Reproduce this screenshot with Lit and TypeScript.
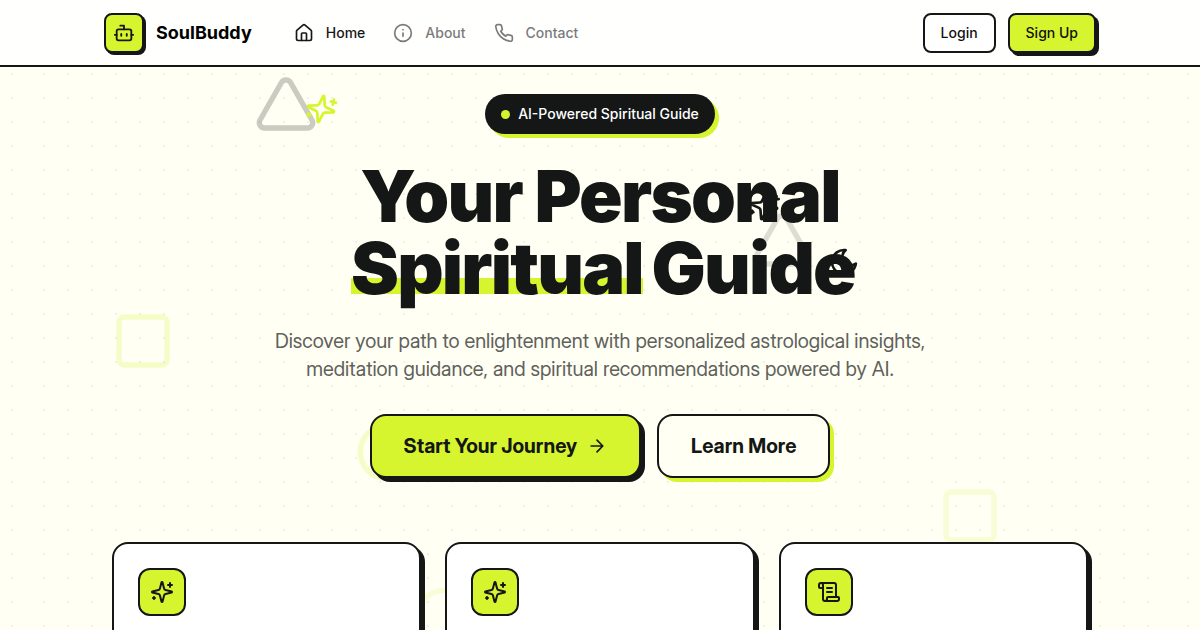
import { LitElement, html, css, svg } from "lit";
import { customElement, property } from "lit/decorators.js";

const icons: Record<string, unknown> = {
  bot: svg`<path d="M12 8V4H8"/><rect width="16" height="12" x="4" y="8" rx="2"/><path d="M2 14h2M20 14h2M15 13v2M9 13v2"/>`,
  home: svg`<path d="M15 21v-8a1 1 0 0 0-1-1h-4a1 1 0 0 0-1 1v8"/><path d="M3 10a2 2 0 0 1 .709-1.528l7-5.999a2 2 0 0 1 2.582 0l7 5.999A2 2 0 0 1 21 10v9a2 2 0 0 1-2 2H5a2 2 0 0 1-2-2z"/>`,
  info: svg`<circle cx="12" cy="12" r="10"/><path d="M12 16v-4M12 8h.01"/>`,
  phone: svg`<path d="M22 16.92v3a2 2 0 0 1-2.18 2 19.79 19.79 0 0 1-8.63-3.07 19.5 19.5 0 0 1-6-6 19.79 19.79 0 0 1-3.07-8.67A2 2 0 0 1 4.11 2h3a2 2 0 0 1 2 1.72 12.84 12.84 0 0 0 .7 2.81 2 2 0 0 1-.45 2.11L8.09 9.91a16 16 0 0 0 6 6l1.27-1.27a2 2 0 0 1 2.11-.45 12.84 12.84 0 0 0 2.81.7A2 2 0 0 1 22 16.92z"/>`,
  arrow: svg`<path d="M5 12h14M12 5l7 7-7 7"/>`,
  sparkles: svg`<path d="M9.937 15.5A2 2 0 0 0 8.5 14.063l-6.135-1.582a.5.5 0 0 1 0-.962L8.5 9.936A2 2 0 0 0 9.937 8.5l1.582-6.135a.5.5 0 0 1 .963 0L14.063 8.5A2 2 0 0 0 15.5 9.937l6.135 1.581a.5.5 0 0 1 0 .964L15.5 14.063a2 2 0 0 0-1.437 1.437l-1.582 6.135a.5.5 0 0 1-.963 0z"/><path d="M20 3v4M22 5h-4M4 17v2M5 18H3"/>`,
  moon: svg`<path d="M12 3a6 6 0 0 0 9 9 9 9 0 1 1-9-9Z"/>`,
  scroll: svg`<path d="M15 12h-5M15 8h-5M19 17V5a2 2 0 0 0-2-2H4"/><path d="M8 21h12a2 2 0 0 0 2-2v-1a1 1 0 0 0-1-1H11a1 1 0 0 0-1 1v1a2 2 0 1 1-4 0V5a2 2 0 1 0-4 0v2a1 1 0 0 0 1 1h3"/>`,
  triangle: svg`<path d="M13.73 4a2 2 0 0 0-3.46 0l-8 14A2 2 0 0 0 4 21h16a2 2 0 0 0 1.73-3Z"/>`,
  square: svg`<rect width="18" height="18" x="3" y="3" rx="2"/>`,
  circle: svg`<circle cx="12" cy="12" r="10"/>`,
};

@customElement("line-icon")
export class LineIcon extends LitElement {
  @property() name = "";
  static styles = css`
    :host { display: block; width: 20px; height: 20px; flex: none; }
    svg { display: block; width: 100%; height: 100%; fill: none; stroke: currentColor; stroke-width: 2; stroke-linecap: round; stroke-linejoin: round; }
  `;
  render() {
    return html`<svg viewBox="0 0 24 24" aria-hidden="true">${icons[this.name]}</svg>`;
  }
}

@customElement("app-root")
export class AppRoot extends LitElement {
  static styles = css`
    :host {
      --ink: #141716;
      --lime: #d7f52f;
      --paper: #fffff3;
      --dots: radial-gradient(circle at center, #f0f0e6 1px, transparent 1px);
      display: block;
      height: 100vh;
      overflow: hidden;
      font-family: Inter, "Liberation Sans", sans-serif;
      color: var(--ink);
      background: var(--dots) 0 14px / 24px 24px, var(--paper);
    }
    * { box-sizing: border-box; }
    a { color: inherit; text-decoration: none; }
    button { font: inherit; color: inherit; cursor: pointer; }
    .header { background: #fffffe; border-bottom: 2px solid var(--ink); }
    .bar { display: flex; align-items: center; max-width: 1024px; margin: 0 auto; padding: 13px 16px 12px; }
    .brand { display: flex; align-items: center; gap: 12px; font-size: 18px; line-height: 28px; font-weight: 700; color: #000; }
    .logo { display: grid; place-items: center; width: 40px; height: 40px; border: 2px solid var(--ink); border-radius: 8px; background: var(--lime); box-shadow: 2px 2px 0 var(--ink); color: var(--ink); }
    .logo line-icon { width: 22px; height: 22px; }
    .nav { display: flex; align-items: center; gap: 28px; margin-left: 42px; flex: 1; font-size: 14px; line-height: 20px; font-weight: 500; }
    .link { display: flex; align-items: center; gap: 12px; color: #7b7b7b; }
    .link.active { color: #171717; }
    .actions { display: flex; gap: 12px; }
    .small { height: 40px; padding: 0 16px; border: 2px solid var(--ink); border-radius: 8px; background: #fff; font-size: 14px; line-height: 20px; font-weight: 500; color: #111; }
    .small.primary { background: var(--lime); box-shadow: 3px 3px 0 var(--ink); }
    .page { position: relative; margin: 0 32px; padding: 27px 80px 0; min-height: 600px; background: var(--dots) 0 19px / 24px 24px, var(--paper); }
    .hero { position: relative; display: flex; flex-direction: column; align-items: center; text-align: center; }
    .pill { display: flex; align-items: center; gap: 8px; height: 40px; padding: 0 16px; border-radius: 20px; background: var(--ink); color: #fff; box-shadow: 4px 4px 0 var(--lime); font-size: 14px; line-height: 20px; font-weight: 500; }
    .dot { width: 9px; height: 9px; border-radius: 50%; background: var(--lime); }
    .title { margin: 26px 0 0; font-size: 72px; line-height: 72px; font-weight: 900; letter-spacing: -0.025em; }
    .mark { margin: 0 -4px 0 6px; background: linear-gradient(var(--lime), var(--lime)) 0 54px / 100% 16px no-repeat; }
    .lead { max-width: 672px; margin: 23px 0 0; font-family: "Inter Display", Inter, sans-serif; font-size: 20px; line-height: 28px; color: #5f615d; }
    .cta { display: flex; gap: 16px; margin-top: 31px; }
    .big { display: flex; align-items: center; gap: 10px; height: 64px; padding: 0 32px; border: 2px solid var(--ink); border-radius: 16px; background: var(--paper); font-family: "Inter Display", Inter, sans-serif; font-size: 20px; line-height: 28px; font-weight: 700; box-shadow: 4px 4px 0 var(--lime); }
    .big.primary { background: var(--lime); box-shadow: 4px 4px 0 var(--ink); }
    .cards { display: grid; grid-template-columns: repeat(3, 1fr); gap: 24px; margin-top: 64px; position: relative; }
    .card { height: 240px; padding: 24px; border: 2px solid var(--ink); border-radius: 16px; background: #fff; box-shadow: 4px 4px 0 var(--ink); }
    .badge { display: grid; place-items: center; width: 48px; height: 48px; border: 2px solid var(--ink); border-radius: 12px; background: var(--lime); }
    .badge line-icon { width: 24px; height: 24px; }
    .float { position: absolute; }
    .shape { width: 64px; height: 64px; }
    .glyph { width: 32px; height: 32px; }
    .lime { color: var(--lime); }
    .f1 { left: 222px; top: 5px; opacity: 0.22; }
    .f2 { left: 718px; top: 141px; opacity: 0.14; }
    .f3 { left: 79px; top: 242px; opacity: 0.22; }
    .f4 { left: 906px; top: 417px; opacity: 0.14; }
    .f5 { left: 323px; top: 353px; opacity: 0.22; }
    .f6 { left: 380px; top: 518px; opacity: 0.14; }
    .g1 { left: 273px; top: 26px; transform: rotate(12deg); }
    .g2 { left: 716px; top: 123px; transform: rotate(10deg); }
    .g3 { left: 796px; top: 179px; transform: rotate(8deg); }
  `;

  render() {
    return html`
      <header class="header">
        <div class="bar">
          <a class="brand" href="#"><span class="logo"><line-icon name="bot"></line-icon></span>SoulBuddy</a>
          <nav class="nav">
            <a class="link active" href="#"><line-icon name="home"></line-icon>Home</a>
            <a class="link" href="#about"><line-icon name="info"></line-icon>About</a>
            <a class="link" href="#contact"><line-icon name="phone"></line-icon>Contact</a>
          </nav>
          <div class="actions">
            <button class="small">Login</button>
            <button class="small primary">Sign Up</button>
          </div>
        </div>
      </header>
      <main class="page">
        <line-icon class="float shape f1" name="triangle"></line-icon>
        <line-icon class="float shape f2" name="triangle"></line-icon>
        <line-icon class="float shape lime f3" name="square"></line-icon>
        <line-icon class="float shape lime f4" name="square"></line-icon>
        <line-icon class="float shape lime f5" name="circle"></line-icon>
        <line-icon class="float shape lime f6" name="circle"></line-icon>
        <line-icon class="float glyph lime g1" name="sparkles"></line-icon>
        <line-icon class="float glyph g2" name="sparkles"></line-icon>
        <line-icon class="float glyph g3" name="moon"></line-icon>
        <section class="hero">
          <div class="pill"><span class="dot"></span>AI-Powered Spiritual Guide</div>
          <h1 class="title">Your Personal<br /><span class="mark">Spiritual</span> Guide</h1>
          <p class="lead">Discover your path to enlightenment with personalized astrological insights, meditation guidance, and spiritual recommendations powered by AI.</p>
          <div class="cta">
            <button class="big primary">Start Your Journey <line-icon name="arrow"></line-icon></button>
            <button class="big">Learn More</button>
          </div>
        </section>
        <section class="cards">
          ${["sparkles", "sparkles", "scroll"].map((name) => html`
            <article class="card"><div class="badge"><line-icon name=${name}></line-icon></div></article>`)}
        </section>
      </main>
    `;
  }
}
